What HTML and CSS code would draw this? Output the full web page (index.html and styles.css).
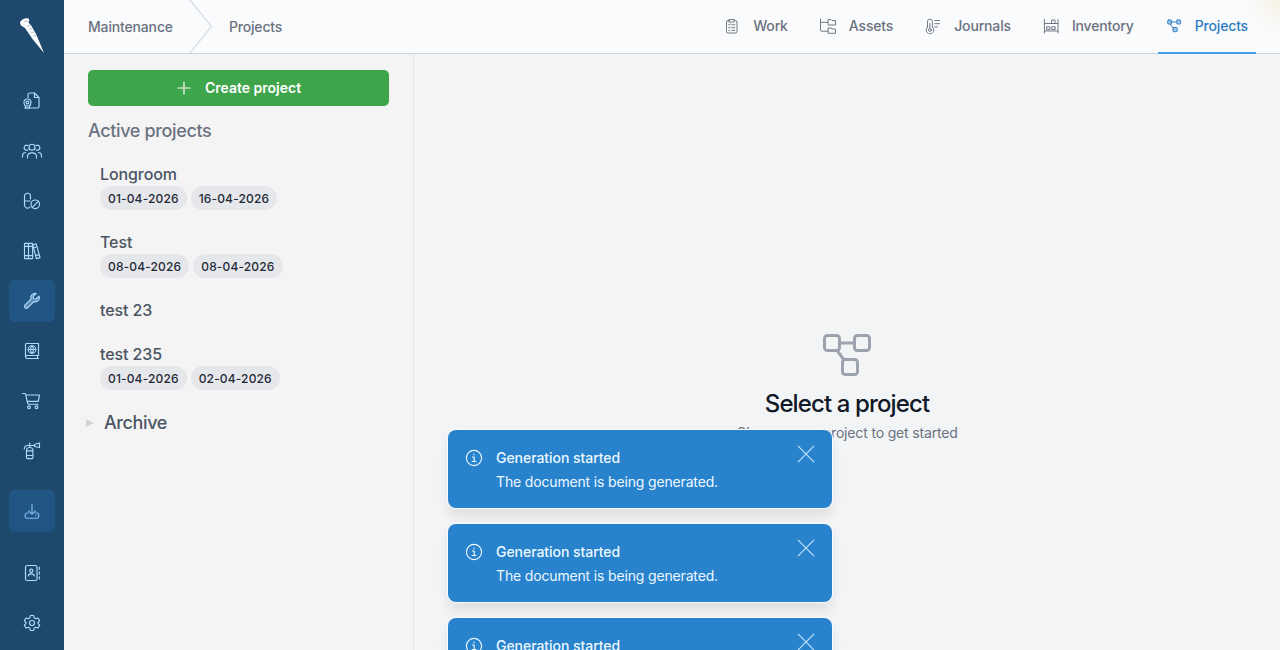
FILE: index.html
```html
<!DOCTYPE html>
<html lang="en">
<head>
<meta charset="utf-8">
<title>Projects</title>
<link rel="stylesheet" href="styles.css">
</head>
<body>
<div class="app">
  <nav class="rail">
    <svg class="logo" width="28" height="38" viewBox="0 0 28 38"><path class="horn" d="M2 6C2 4 4 2.500 7 1.500C9.500.8 11.300 1.500 11.200 3L10.500 5.500L13.500 9L18.500 18L26 36L14.500 22L7 11L3 8.500Z"/><path class="horn-lines" d="M6 4.500L9.500 4M9 9.500L12 8.500M11 12.500L14 11.500M13 15.500L16 15M15.500 19L18 18.500"/></svg>
    <div class="rail-items">
      <a class="rail-item"><svg class="icon" width="20" height="20" viewBox="0 0 20 20"><path d="M6 6.500V4Q6 2 8 2H12.500L17 6.500V15.500Q17 17 15.500 17H9M12.500 2V6.500H17"/><circle cx="5.500" cy="11.500" r="3.500"/><circle cx="5.500" cy="11.500" r="1.400"/><path d="M3.300 14.500V17.500L5.500 16.600L7.700 17.500V14.500"/></svg></a>
      <a class="rail-item"><svg class="icon" width="20" height="20" viewBox="0 0 20 20"><circle cx="10" cy="6.200" r="3"/><path d="M5.500 17V15.500C5.500 13 7.300 11.800 10 11.800S14.500 13 14.500 15.500V17M6 8.800A2.500 2.500 0 1 1 6 4.500M14 4.500A2.500 2.500 0 1 1 14 8.800M.5 16V14.500Q.5 11.700 3.500 11.500M19.500 16V14.500Q19.500 11.700 16.500 11.500"/></svg></a>
      <a class="rail-item"><svg class="icon" width="20" height="20" viewBox="0 0 20 20"><path d="M8.500 8V5.200A3 3 0 0 0 2.500 5.200V14.200A3.100 3.100 0 0 0 8 16M2.500 10H8"/><circle cx="13.300" cy="13.300" r="4.300"/><path d="M10.300 16.300L16.300 10.300"/></svg></a>
      <a class="rail-item"><svg class="icon" width="20" height="20" viewBox="0 0 20 20"><path d="M2.500 3Q2.500 2.300 3.200 2.300H10Q10.600 2.300 10.600 3V17Q10.600 17.600 10 17.600H3.200Q2.500 17.600 2.500 17ZM6.500 2.300V17.600M2.500 5.300H10.600M2.500 14.600H10.600M10.800 3.800L14.200 2.900L18 16.600L14.300 17.600ZM11.500 6.700L15 5.700M13.500 14.600L17.200 13.600"/></svg></a>
      <a class="rail-item rail-item-active"><svg class="icon icon-filled" width="20" height="20" viewBox="0 0 20 20"><path d="M17 5.200L14 8L11.500 7.800L11.200 5.300L14.100 2.500Q11.800 1.800 9.700 3.900Q8.300 5.700 9 8.100L2.800 14.200Q1.800 15.400 2.900 16.700Q4.200 18 5.500 16.900L11.600 10.800Q14 11.300 15.900 9.800Q18.100 7.600 17 5.200Z"/><path d="M4.500 15.200H4.600"/></svg></a>
      <a class="rail-item"><svg class="icon" width="20" height="20" viewBox="0 0 20 20"><path d="M4.500 2.500H16.500V14.500H5.500Q3.500 14.500 3.500 16V3.500Q3.500 2.500 4.500 2.500ZM3.500 16Q3.500 17.500 5 17.500H16.500M15.500 14.500V17.500"/><circle cx="10" cy="8.500" r="3.800"/><path d="M6.200 8.500H13.800M10 4.700C8.200 7 8.200 10 10 12.300M10 4.700C11.800 7 11.800 10 10 12.300"/></svg></a>
      <a class="rail-item"><svg class="icon" width="20" height="20" viewBox="0 0 20 20"><path d="M.8 2.500H2.600Q3.400 2.500 3.600 3.300L5.600 12Q6 13.200 7 13.200H16M3.900 4H17.500L16.300 10.300H5.300"/><circle cx="7" cy="16.300" r="1.400"/><circle cx="14.500" cy="16.300" r="1.400"/></svg></a>
      <a class="rail-item"><svg class="icon" width="20" height="20" viewBox="0 0 20 20"><path d="M4.500 9.500Q4.500 6.500 7.700 6.500T10.900 9.500V16.500Q10.900 17.600 9.800 17.600H5.600Q4.500 17.600 4.500 16.500ZM4.500 9.800H10.900M4.500 14.500H10.900M7.700 6.500V2M2.300 8Q2.500 4.500 5.500 4.500H12.500M12.500 3.500L17.500 2V6.500L12.500 5.500Z"/></svg></a>
    </div>
    <div class="rail-items rail-lower">
      <a class="rail-item rail-item-active rail-download"><svg class="icon" width="20" height="20" viewBox="0 0 20 20"><path d="M10 3V13M6.500 9.800L10 13.200L13.500 9.800M6.500 12H5Q3.200 12 3.200 14V15.500Q3.200 17.200 5 17.200H15Q16.800 17.200 16.800 15.500V14Q16.800 12 15 12H13.500M13.500 14.600H14"/></svg></a>
      <a class="rail-item"><svg class="icon" width="20" height="20" viewBox="0 0 20 20"><rect x="3.500" y="2.500" width="11.500" height="15" rx="1.800"/><circle cx="9.300" cy="7.700" r="1.600"/><path d="M6.300 13Q6.300 10.800 9.300 10.800T12.300 13M17.300 4V6.300M17.300 8.800V11.200M17.300 13.700V16"/></svg></a>
      <a class="rail-item"><svg class="icon" width="20" height="20" viewBox="0 0 20 20"><circle cx="10" cy="10" r="2.500"/><path d="M8.300 2.500H11.700L12.200 4.800L13.800 5.700L16 5L17.700 7.900L16 9.500V10.500L17.700 12.100L16 15L13.800 14.300L12.200 15.200L11.700 17.500H8.300L7.800 15.200L6.200 14.300L4 15L2.300 12.100L4 10.500V9.500L2.300 7.900L4 5L6.200 5.700L7.800 4.800Z"/></svg></a>
    </div>
  </nav>

  <div class="workspace">
    <header class="topbar">
      <div class="crumbs">
        <a>Maintenance</a>
        <svg class="crumb-arrow" width="24" height="53" viewBox="0 0 24 53"><path d="M1 0L22.500 26.500L1 53"/></svg>
        <a>Projects</a>
      </div>
      <div class="tabs">
        <a class="tab"><svg class="icon" width="16" height="18" viewBox="0 0 16 18"><path d="M5 3.500H4Q2.500 3.500 2.500 5V14.500Q2.500 16 4 16H11.500Q13 16 13 14.500V5Q13 3.500 11.500 3.500H10.500M5.200 2.500H10.300V5H5.200ZM4.600 7.500L5.300 8.100L6.200 7M4.600 10.500L5.300 11.100L6.200 10M5 13.400H5.700M7.700 7.800H10.800M7.700 10.700H10.800M7.700 13.400H10.800"/></svg>Work</a>
        <a class="tab"><svg class="icon wide" width="18" height="18" viewBox="0 0 18 18"><path d="M1.500 2V13Q1.500 14.200 2.700 14.200H9M1.500 5.300H9M9.500 2.500H12L13 3.500H16.500V8H9.500ZM9.500 11H12L13 12H16.500V16.300H9.500Z"/></svg>Assets</a>
        <a class="tab"><svg class="icon" width="16" height="18" viewBox="0 0 16 18"><path d="M2.500 10V4.500A2.400 2.400 0 0 1 7.300 4.500V10A3.800 3.800 0 1 1 2.500 10ZM4.900 6.500V11.500M9.800 3.500H14.500M9.800 6.700H14.500M9.800 9.900H12.500"/><circle cx="4.900" cy="13" r="1.400"/></svg>Journals</a>
        <a class="tab"><svg class="icon" width="16" height="18" viewBox="0 0 16 18"><path d="M1.400 2.500V16M15 2.500V16M1.400 6.500H15M1.400 14H15M9 3H12V6.500H9ZM4 9.800H7V12.500H4ZM9.200 9.800H12.200V12.500H9.200Z"/></svg>Inventory</a>
        <a class="tab tab-active"><svg class="icon icon-filled" width="16" height="18" viewBox="0 0 16 18"><path d="M5 5H10M4 7L7.200 11"/><rect x="1.700" y="3" width="4" height="4" rx=".8"/><rect x="10.700" y="3" width="4" height="4" rx=".8"/><rect x="7" y="10.500" width="4.200" height="4.200" rx=".8"/></svg>Projects</a>
      </div>
    </header>

    <div class="body">
      <aside class="panel">
        <button class="create"><svg class="icon" width="14" height="14" viewBox="0 0 14 14"><path d="M7 1V13M1 7H13"/></svg>Create project</button>
        <h2 class="panel-title">Active projects</h2>
        <ul class="projects">
          <li class="project"><span>Longroom</span><div class="dates"><time>01-04-2026</time><time>16-04-2026</time></div></li>
          <li class="project"><span>Test</span><div class="dates"><time>08-04-2026</time><time>08-04-2026</time></div></li>
          <li class="project"><span>test 23</span></li>
          <li class="project"><span>test 235</span><div class="dates"><time>01-04-2026</time><time>02-04-2026</time></div></li>
        </ul>
        <div class="archive"><svg width="8" height="8" viewBox="0 0 8 8"><path d="M0 0L8 4L0 8Z"/></svg>Archive</div>
      </aside>
      <main class="empty">
        <svg class="empty-icon" width="50" height="44" viewBox="0 0 50 44"><path d="M18 10H32M15.500 18L22 27"/><rect x="2.500" y="2.500" width="15" height="15" rx="3"/><rect x="32.500" y="2.500" width="15" height="15" rx="3"/><rect x="20.500" y="26.500" width="15" height="15" rx="3"/></svg>
        <h1>Select a project</h1>
        <p>Choose your project to get started</p>
      </main>
    </div>
  </div>
</div>

<div class="toasts">
  <div class="toast"><svg class="icon" width="18" height="18" viewBox="0 0 18 18"><circle cx="9" cy="9" r="7.600"/><path d="M7.500 8H9.200V12.500M7.200 12.500H11M9 5V5.800"/></svg><div class="toast-text"><strong>Generation started</strong><span>The document is being generated.</span></div><svg class="icon close" width="18" height="18" viewBox="0 0 18 18"><path d="M1.200 1.200L16.800 16.800M16.800 1.200L1.200 16.800"/></svg></div>
  <div class="toast"><svg class="icon" width="18" height="18" viewBox="0 0 18 18"><circle cx="9" cy="9" r="7.600"/><path d="M7.500 8H9.200V12.500M7.200 12.500H11M9 5V5.800"/></svg><div class="toast-text"><strong>Generation started</strong><span>The document is being generated.</span></div><svg class="icon close" width="18" height="18" viewBox="0 0 18 18"><path d="M1.200 1.200L16.800 16.800M16.800 1.200L1.200 16.800"/></svg></div>
  <div class="toast toast-clipped"><svg class="icon" width="18" height="18" viewBox="0 0 18 18"><circle cx="9" cy="9" r="7.600"/><path d="M7.500 8H9.200V12.500M7.200 12.500H11M9 5V5.800"/></svg><div class="toast-text"><strong>Generation started</strong></div><svg class="icon close" width="18" height="18" viewBox="0 0 18 18"><path d="M1.200 1.200L16.800 16.800M16.800 1.200L1.200 16.800"/></svg></div>
</div>
</body>
</html>
```
FILE: styles.css
```css
* { box-sizing: border-box; }
body { margin: 0; height: 650px; overflow: hidden; font: 14px/24px Inter, sans-serif; letter-spacing: -.16px; color: #6b7280; }
h1, h2, p, ul { margin: 0; padding: 0; font-weight: 400; }
svg { display: block; flex: none; }
.icon { fill: none; stroke: currentColor; stroke-width: 1.15; stroke-linecap: round; stroke-linejoin: round; }
.icon-filled { fill: currentColor; fill-opacity: .4; }
.app { display: flex; height: 650px; }
.rail { width: 64px; flex: none; background: #1e496d; color: #b1dafb; padding: 17px 9px 0; }
.logo { margin-left: 9px; }
.horn { fill: #fff; }
.horn-lines { fill: none; stroke: #8aa2b7; stroke-width: .7; }
.rail-items { display: flex; flex-direction: column; gap: 8px; margin-top: 25px; }
.rail-lower { margin-top: 18px; }
.rail-item { height: 42px; border-radius: 6px; display: flex; align-items: center; justify-content: center; }
.rail-item-active { background: #205584; color: #b1dafb; }
.rail-download { color: #84bdf0; margin-bottom: 12px; }
.workspace { flex: 1; display: flex; flex-direction: column; min-width: 0; }
.topbar { height: 54px; display: flex; justify-content: space-between; border-bottom: 1px solid #cdd4db; background: radial-gradient(circle at 100% 0, #f8f2e5 0, #fafafa 28px, #f9fbfd 58px); padding: 0 24px; font-weight: 500; }
.crumbs { display: flex; align-items: center; }
.crumb-arrow { margin: 0 16px; fill: none; stroke: #d9dde2; stroke-width: 1.2; }
.tabs { display: flex; gap: 16px; }
.tab { height: 54px; display: flex; align-items: center; padding: 0 8px; gap: 13px; border-bottom: 2px solid transparent; }
.tab .wide { margin-left: -1px; margin-right: -1px; }
.tab .icon { stroke-width: .95; }
.tab-active { color: #2c7dc4; border-bottom-color: #439fe2; }
.body { flex: 1; display: flex; min-height: 0; }
.panel { width: 350px; flex: none; padding: 16px 24px; background: #f4f4f4; border-right: 1px solid #e2e5e9; }
.create { display: flex; align-items: center; justify-content: center; gap: 14px; width: 301px; height: 36px; padding: 0 0 0 1px; border: 0; border-radius: 5px; background: #3fa54b; color: #fff; font: 600 14px/20px Inter, sans-serif; letter-spacing: 0; }
.panel-title { font-size: 18px; line-height: 28px; font-weight: 450; letter-spacing: -.36px; margin-top: 11px; }
.projects { list-style: none; margin-top: 9px; color: #4b5563; }
.project { padding: 8px 12px 12px; font-size: 16px; line-height: 24px; font-weight: 450; letter-spacing: -.1px; }
.project > span { display: block; }
.dates { display: flex; gap: 4px; }
.dates time { height: 24px; padding: 0 8px; border-radius: 12px; background: #e5e7eb; color: #1f2937; font-size: 12px; line-height: 25px; font-weight: 500; letter-spacing: .15px; }
.archive { display: flex; align-items: center; gap: 10px; margin: 7px 0 0 -2px; font-size: 18px; line-height: 28px; font-weight: 450; letter-spacing: -.4px; color: #4b5563; }
.archive svg { fill: #d1d3d7; }
.empty { flex: 1; display: flex; flex-direction: column; align-items: center; padding-top: 279px; background: #f2f4f6; }
.empty-icon { fill: none; stroke: #9ca3af; stroke-width: 3; }
.empty h1 { margin-top: 11px; color: #111827; font-size: 24px; line-height: 32px; font-weight: 500; letter-spacing: -.88px; }
.empty p { margin-top: 1px; font-size: 14px; }
.toasts { position: absolute; left: 448px; top: 430px; display: flex; flex-direction: column; gap: 16px; width: 384px; height: 220px; overflow: visible; }
.toast { flex: none; height: 78px; display: flex; padding: 16px 17px; border-radius: 8px; background: #2982cc; color: #ebf8ff; box-shadow: 0 0 0 1px #f8fbff, 0 8px 12px rgba(0,0,0,.09); }
.toast-clipped { height: 32px; border-radius: 8px 8px 0 0; }
.toast > .icon { margin-top: 3px; }
.toast-text { flex: 1; margin-left: 13px; display: flex; flex-direction: column; }
.toast-text strong { font-weight: 500; letter-spacing: -.05px; }
.toast > .close { margin-top: -1px; color: #c5e4fa; }
```
